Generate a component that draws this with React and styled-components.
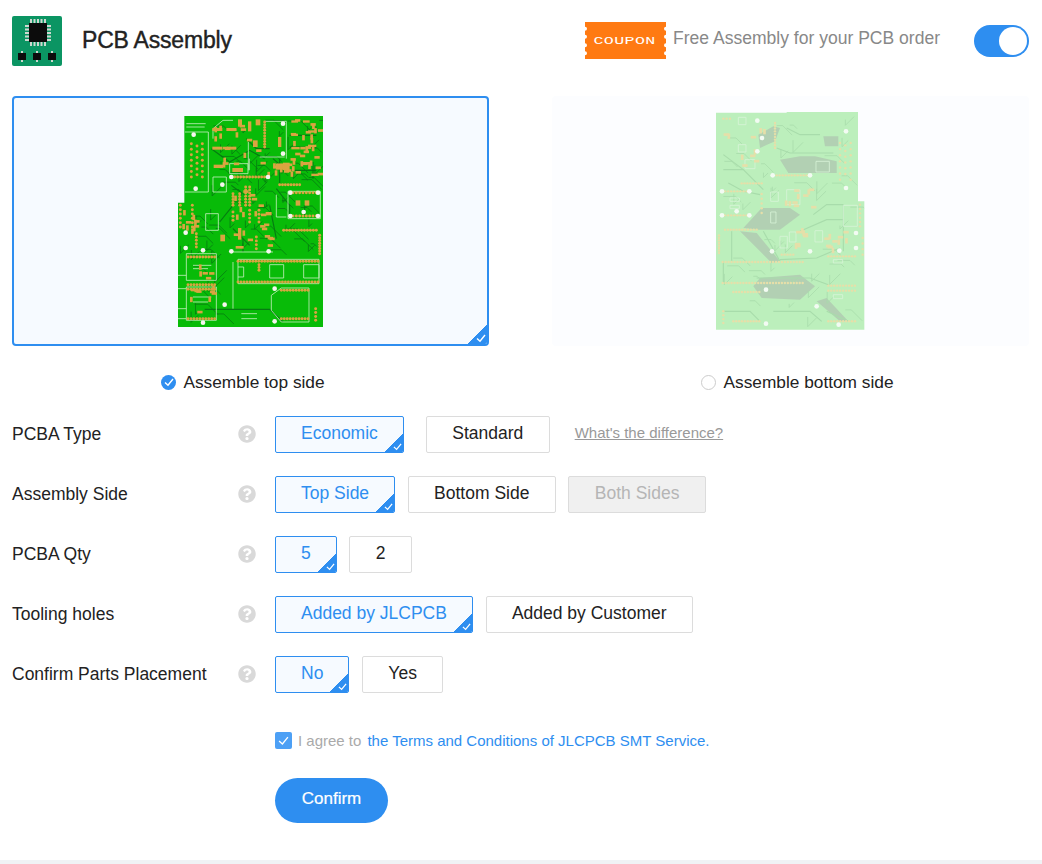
import React from 'react'
import styled, { createGlobalStyle } from 'styled-components'
import { FaQuestionCircle } from 'react-icons/fa'

const BLUE = '#2e8ef0'

const GlobalStyle = createGlobalStyle`
    html, body {
        margin: 0;
        padding: 0;
        background: #fff;
        font-family: "Liberation Sans", Arial, sans-serif;
        color: #222;
    }
`

// small seeded random so the board drawing stays the same on every load
const makeRandom = (seed) => () => {
    seed = (seed * 16807) % 2147483647
    return seed / 2147483647
}

const lineOf = (x1, y1, x2, y2, n) =>
    Array.from({ length: n }, (_, i) => [
        x1 + ((x2 - x1) * i) / Math.max(n - 1, 1),
        y1 + ((y2 - y1) * i) / Math.max(n - 1, 1),
    ])

const scatter = (rand, x, y, w, h, n) =>
    Array.from({ length: n }, () => [x + rand() * w, y + rand() * h, rand() > 0.5])

const randomTraces = (rand, x, y, w, h, n) =>
    Array.from({ length: n }, () => {
        const sx = x + rand() * w
        const sy = y + rand() * h
        const a = 10 + rand() * 30
        const b = 8 + rand() * 25
        return rand() > 0.5
            ? `M${sx} ${sy} h${a} l${b} ${b}`
            : `M${sx} ${sy} v${a} l${b} ${-b}`
    })

// all the numbers below are in 3x zoom units, the svg viewBox takes care of it
const TOP_HOLES = [[72, 88], [78, 250], [185, 215], [295, 215], [340, 55], [340, 145], [362, 262], [445, 262], [362, 332], [445, 332], [48, 382], [48, 428], [100, 435], [185, 438], [297, 438], [315, 550], [165, 598], [100, 652], [315, 648], [158, 238], [402, 320]]
const TOP_ROWS = [
    [205, 468, 445, 468, 28], [205, 530, 445, 530, 28], [335, 555, 415, 555, 10], [335, 640, 415, 640, 10],
    [55, 455, 135, 455, 10], [55, 538, 135, 538, 10], [55, 552, 135, 552, 10], [55, 640, 135, 640, 10],
    [342, 375, 440, 375, 12], [195, 215, 285, 215, 11], [285, 50, 285, 125, 10], [330, 238, 390, 238, 8],
    [370, 262, 440, 262, 8], [370, 332, 440, 332, 8], [450, 390, 450, 445, 8], [65, 115, 65, 215, 7],
    [82, 122, 82, 208, 6], [98, 115, 98, 215, 7], [228, 245, 228, 300, 7], [240, 245, 240, 300, 7],
    [190, 265, 190, 300, 5], [210, 265, 210, 300, 5], [32, 300, 32, 365, 6], [68, 300, 68, 365, 6],
    [80, 385, 80, 425, 5], [438, 610, 438, 645, 4], [190, 320, 190, 345, 3], [240, 315, 240, 350, 4],
    [268, 315, 268, 350, 4], [260, 395, 260, 430, 4], [268, 478, 268, 495, 3],
]
const TOP_TRACES = [
    'M125 130 L180 170 L240 135 L285 160', 'M185 240 L215 262 L205 300', 'M320 250 L360 300 L360 340',
    'M105 612 L300 612 L340 650', 'M310 160 L350 195 L440 195', 'M360 90 L440 90', 'M360 125 L440 125',
    'M230 100 L260 130 L300 130', 'M190 370 L240 420', 'M220 400 L220 440', 'M330 160 L330 240',
    'M300 300 L320 400', 'M150 350 L190 300', 'M430 170 L430 220', 'M405 300 L405 330',
]
const TOP_OUTLINES = [
    'M46 80 H116 V260 H46', 'M130 70 L160 45 H190 M130 100 V70', 'M50 445 H140 V525 H50 Z', 'M50 545 H140 V645 H50 Z',
    'M205 462 H448 V535 H205 Z', 'M305 570 L335 548 H418 V650 H335 L305 615 Z', 'M355 258 H452 V340 H355 Z',
    'M185 440 H310', 'M108 325 H146 V375 H108 Z', 'M300 478 H342 V518 H300 Z', 'M402 478 H448 V518 H402 Z',
    'M285 48 H350 M350 48 V160 M270 155 H345', 'M130 215 H170 V260 H130 Z', 'M320 268 V335 H350',
    'M25 640 H50 M25 610 H50 M25 510 H50 M25 550 H50', 'M180 175 H235 V205 H180 Z',
    'M50 55 H108 M50 65 H105', 'M215 625 H262 M215 640 H262', 'M70 480 H125 M70 490 H115 M70 575 H125 M70 590 H115',
    'M205 485 H222 V515 H205', 'M190 470 V610', 'M236 110 V195', 'M239 160 V195',
]
const TOP_BIG_PADS = [
    [128, 68, 30, 9], [170, 68, 30, 9], [128, 124, 30, 9], [170, 124, 30, 9], [205, 42, 12, 22], [235, 48, 10, 30],
    [258, 42, 14, 18], [250, 105, 14, 20], [325, 95, 10, 30], [318, 175, 22, 18], [340, 172, 20, 22], [188, 188, 32, 12],
    [132, 178, 28, 10], [152, 388, 14, 20], [205, 368, 10, 35], [198, 422, 24, 8], [288, 320, 18, 10],
    [365, 45, 20, 7], [400, 45, 20, 7], [365, 85, 20, 7], [415, 75, 25, 7], [365, 125, 25, 7], [415, 118, 25, 7],
    [395, 170, 28, 7], [425, 205, 22, 7], [378, 285, 14, 16], [405, 285, 14, 16],
]

const BOTTOM_HOLES = [[438, 80], [438, 250], [172, 48], [172, 140], [218, 212], [330, 212], [66, 260], [148, 260], [66, 332], [148, 332], [110, 320], [468, 385], [468, 430], [418, 438], [216, 440], [330, 440], [198, 555], [350, 605], [198, 657], [416, 660], [186, 100]]
const BOTTOM_ROWS = [
    [68, 472, 308, 472, 28], [68, 535, 308, 535, 28], [100, 562, 178, 562, 10], [100, 650, 178, 650, 10],
    [75, 375, 170, 375, 12], [230, 212, 320, 212, 11], [225, 55, 225, 130, 10], [125, 236, 185, 236, 8],
    [75, 260, 140, 260, 8], [75, 332, 140, 332, 8], [57, 392, 57, 445, 8], [420, 115, 420, 225, 7],
    [436, 122, 436, 208, 6], [452, 115, 452, 225, 7], [385, 543, 465, 543, 10], [385, 558, 465, 558, 10],
    [385, 650, 465, 650, 10], [385, 455, 465, 455, 10], [185, 268, 185, 325, 5], [245, 450, 280, 450, 5],
    [70, 620, 70, 655, 4], [480, 300, 480, 365, 6], [488, 400, 488, 450, 4], [70, 42, 90, 42, 3],
]
const BOTTOM_TRACES = [
    'M70 195 L130 195 L190 255', 'M70 620 L150 620 L180 650', 'M385 540 L330 520 L170 520', 'M95 380 V470',
    'M70 470 V535', 'M340 330 L380 300 H430', 'M300 380 L380 345 H430', 'M240 465 L350 460 L420 430',
    'M190 380 L240 470', 'M230 130 L270 145 H400', 'M85 235 L130 260 L180 270', 'M220 620 H330 L365 650',
    'M380 620 L445 650', 'M70 150 L130 195', 'M260 70 L300 90 H360', 'M430 300 V440',
]
const BOTTOM_FILLS = [
    'M130 370 L185 310 L270 310 L300 330 L240 375 L175 375 Z', 'M240 165 L300 155 H345 L410 170 V205 H300 L265 205 Z',
    'M175 90 L220 65 L240 70 L225 110 L180 130 Z', 'M180 520 L300 510 L345 545 L300 585 L185 580 L160 545 Z',
    'M120 380 L170 385 L240 470 L215 475 Z', 'M370 95 H415 V125 H375 Z', 'M350 590 L380 580 L445 650 L420 650 Z',
]
const BOTTOM_OUTLINES = [
    'M115 38 H138 V60 H115 Z', 'M115 120 H138 V142 H115 Z', 'M135 165 H165 V192 H135 Z', 'M348 170 H388 V202 H348 Z',
    'M212 322 H228 V355 H212 Z', 'M345 378 H368 V412 H345 Z', 'M268 382 H288 V412 H268 Z', 'M240 395 H262 V430 H240 Z',
    'M430 302 H472 V365 H430 Z', 'M90 280 H118 V290 H90 Z', 'M90 302 H118 V312 H90 Z', 'M400 570 H428 V582 H400 Z',
    'M400 465 H428 V475 H400 Z', 'M212 262 H235 V290 H212 Z', 'M260 255 H300 V300 H260 Z',
]

const Board = ({ points, bg, viewBox, clipId, holes, rows, traces, outlines, fills, bigPads = [], colors, seed, clusters, noise, padSize }) => {
    const rand = makeRandom(seed)
    const smd = clusters.flatMap(([x, y, w, h, n]) => scatter(rand, x, y, w, h, n))
    const extra = noise.flatMap(([x, y, w, h, n]) => randomTraces(rand, x, y, w, h, n))
    const [, , vw, vh] = viewBox.split(' ')
    return (
        <BoardSvg viewBox={viewBox} width={vw / 3} height={vh / 3}>
            <clipPath id={clipId}><polygon points={points} /></clipPath>
            <polygon points={points} fill={bg} />
            <g clipPath={`url(#${clipId})`}>
                {fills.map((d, i) => <path key={i} d={d} fill={colors.fill} />)}
                {extra.map((d, i) => <path key={i} d={d} fill="none" stroke={colors.trace} strokeWidth="2.4" />)}
                {traces.map((d, i) => <path key={i} d={d} fill="none" stroke={colors.trace} strokeWidth="3.4" />)}
                {outlines.map((d, i) => <path key={i} d={d} fill="none" stroke={colors.outline} strokeWidth="2.4" />)}
                {smd.map(([x, y, tall], i) => (
                    <rect key={i} x={x} y={y} width={tall ? 8 : 16} height={tall ? 16 : 8} fill={colors.pad} />
                ))}
                {bigPads.map(([x, y, w, h], i) => <rect key={i} x={x} y={y} width={w} height={h} fill={colors.pad} />)}
                {rows.flatMap(([x1, y1, x2, y2, n], r) => lineOf(x1, y1, x2, y2, n).map(([x, y], i) => (
                    <circle key={`${r}-${i}`} cx={x} cy={y} r={padSize} fill={colors.pad} />
                )))}
                {holes.map(([x, y], i) => <circle key={i} cx={x} cy={y} r="7" fill={colors.hole} />)}
            </g>
        </BoardSvg>
    )
}

const CHIP_COLS = [18, 21.5, 25, 28.5, 32]
const CHIP_ROWS = [9, 12.5, 16, 19.5, 23]

const ChipLogo = () => (
    <svg width="50" height="50" viewBox="0 0 50 50">
        <rect width="50" height="50" rx="2" fill="#0b9563" />
        {CHIP_COLS.map((p) => (
            <React.Fragment key={p}>
                <rect x={p} y="3" width="2" height="4" fill="#cfd8d0" />
                <rect x={p} y="26" width="2" height="4" fill="#cfd8d0" />
            </React.Fragment>
        ))}
        {CHIP_ROWS.map((p) => (
            <React.Fragment key={p}>
                <rect x="13" y={p} width="4" height="2" fill="#cfd8d0" />
                <rect x="35" y={p} width="4" height="2" fill="#cfd8d0" />
            </React.Fragment>
        ))}
        <rect x="17" y="7" width="18" height="19" fill="#0c0c0c" />
        {[6, 21, 36].map((x) => (
            <React.Fragment key={x}>
                <rect x={x + 3} y="35" width="2" height="11" fill="#cfd8d0" />
                <rect x={x} y="37" width="8" height="7" fill="#0c0c0c" />
            </React.Fragment>
        ))}
    </svg>
)

const NOTCHES = [6.7, 14.7, 23.3, 31.3]

const ticketPath = () => {
    // ticket edge: little half rounds bitten out on both sides
    let d = 'M0 0H81'
    NOTCHES.forEach((y) => { d += `V${y - 2}A2 2 0 0 0 81 ${y + 2}` })
    d += 'V37H0'
    ;[...NOTCHES].reverse().forEach((y) => { d += `V${y + 2}A2 2 0 0 0 0 ${y - 2}` })
    return d + 'Z'
}

const CouponBadge = () => (
    <svg width="81" height="37" viewBox="0 0 81 37">
        <path d={ticketPath()} fill="#ff7a12" />
        <text transform="translate(8.5 22.2) scale(1.45 1)" fill="#fff" fontFamily="Liberation Mono, monospace" fontSize="11.5" letterSpacing=".25">COUPON</text>
    </svg>
)

const CheckMark = ({ size = 9, color = '#fff', width = 1.4 }) => (
    <svg width={size} height={size} viewBox="0 0 10 10">
        <path d="M1 5.4 L4 8.2 L9 2" fill="none" stroke={color} strokeWidth={width} />
    </svg>
)

const Corner = ({ big }) => (
    <CornerWrap $big={big}>
        <CheckMark size={big ? 10 : 9} />
    </CornerWrap>
)

const Option = ({ active, disabled, children }) => (
    <OptionBtn $active={active} $disabled={disabled}>
        {children}
        {active && <Corner />}
    </OptionBtn>
)

const FORM_ROWS = [
    { label: 'PCBA Type', options: [['Economic', true], ['Standard']], wide: true, link: "What's the difference?" },
    { label: 'Assembly Side', options: [['Top Side', true], ['Bottom Side'], ['Both Sides', false, true]] },
    { label: 'PCBA Qty', options: [['5', true], ['2']] },
    { label: 'Tooling holes', options: [['Added by JLCPCB', true], ['Added by Customer']] },
    { label: 'Confirm Parts Placement', options: [['No', true], ['Yes']] },
]

const App = () => {
    return (
        <Page>
            <GlobalStyle />
            <Header>
                <Brand>
                    <ChipLogo />
                    <Title>PCB Assembly</Title>
                </Brand>
                <Promo>
                    <CouponBadge />
                    <PromoText>Free Assembly for your PCB order</PromoText>
                    <Toggle><Knob /></Toggle>
                </Promo>
            </Header>

            <Cards>
                <CardCol>
                    <Card $active>
                        <Board
                            viewBox="25 32 437 633"
                            clipId="top-board"
                            points="44,32 462,32 462,665 25,665 25,292 44,292"
                            bg="#08bb08"
                            holes={TOP_HOLES}
                            rows={TOP_ROWS}
                            traces={TOP_TRACES}
                            outlines={TOP_OUTLINES}
                            bigPads={TOP_BIG_PADS}
                            fills={[]}
                            seed={4211}
                            padSize={4.4}
                            colors={{ trace: '#067a12', outline: '#c9efc2', pad: '#d9a441', hole: '#f6f6f0', fill: '#067a12' }}
                            clusters={[[360, 40, 85, 175, 30], [125, 45, 150, 135, 18], [190, 240, 110, 180, 20], [60, 465, 70, 160, 14], [290, 170, 90, 30, 10], [30, 300, 50, 70, 10]]}
                            noise={[[120, 40, 330, 200, 42], [180, 240, 260, 200, 30], [30, 300, 120, 140, 12], [60, 460, 80, 180, 10]]}
                        />
                        <Corner big />
                    </Card>
                    <RadioLine $offset={-7.5}>
                        <RadioOn><CheckMark size={10} /></RadioOn>
                        Assemble top side
                    </RadioLine>
                </CardCol>
                <CardCol>
                    <Card>
                        <Board
                            viewBox="48 22 445 653"
                            clipId="bottom-board"
                            points="48,24 260,24 260,22 474,22 474,290 493,290 493,675 48,675"
                            bg="#bcefbc"
                            holes={BOTTOM_HOLES}
                            rows={BOTTOM_ROWS}
                            traces={BOTTOM_TRACES}
                            outlines={BOTTOM_OUTLINES}
                            fills={BOTTOM_FILLS}
                            seed={907}
                            padSize={3.6}
                            colors={{ trace: '#a8dcab', outline: '#d8f4d8', pad: '#e6dfa9', hole: '#f3fbf3', fill: '#b2d0b3' }}
                            clusters={[[70, 40, 120, 150, 10], [250, 250, 90, 60, 10], [350, 370, 90, 60, 10], [240, 370, 90, 60, 8]]}
                            noise={[[70, 40, 380, 260, 22], [70, 300, 400, 340, 24]]}
                        />
                    </Card>
                    <RadioLine $offset={7}>
                        <RadioOff />
                        Assemble bottom side
                    </RadioLine>
                </CardCol>
            </Cards>

            <Form>
                {FORM_ROWS.map((row) => (
                    <Row key={row.label}>
                        <Label>{row.label}</Label>
                        <HelpIcon><FaQuestionCircle size={18} /></HelpIcon>
                        <Options $wide={row.wide}>
                            {row.options.map(([text, active, disabled]) => (
                                <Option key={text} active={active} disabled={disabled}>{text}</Option>
                            ))}
                            {row.link && <DiffLink>{row.link}</DiffLink>}
                        </Options>
                    </Row>
                ))}
            </Form>

            <Agree>
                <CheckBox><CheckMark size={11} width={1.2} /></CheckBox>
                <AgreeText>I agree to</AgreeText>
                <TermsLink>the Terms and Conditions of JLCPCB SMT Service.</TermsLink>
            </Agree>
            <ConfirmBtn>Confirm</ConfirmBtn>
            <FooterBand />
        </Page>
    )
}

const Page = styled.div`
    width: 1042px;
    height: 864px;
    position: relative;
    overflow: hidden;
    background: #fff;
`

const Header = styled.div`
    height: 96px;
    padding: 0 13px 0 12px;
    box-sizing: border-box;
    display: flex;
    justify-content: space-between;
    align-items: flex-start;
`

const Brand = styled.div`
    display: flex;
    align-items: center;
    gap: 20px;
    margin-top: 16px;
    height: 50px;
`

const Title = styled.h1`
    margin: 0;
    font-size: 23px;
    font-weight: 400;
    color: #222;
    -webkit-text-stroke: 0.4px #222;
    letter-spacing: -0.2px;
    position: relative;
    top: -1px;
`

const Promo = styled.div`
    display: flex;
    align-items: center;
    margin-top: 22px;
    height: 37px;
`

const PromoText = styled.span`
    font-size: 17.55px;
    color: #888;
    margin-left: 7px;
    position: relative;
    top: -2px;
`

const Toggle = styled.div`
    width: 55px;
    height: 32px;
    box-sizing: border-box;
    border-radius: 16px;
    background: ${BLUE};
    margin-left: 34px;
    padding: 2px;
    display: flex;
    justify-content: flex-end;
`

const Knob = styled.div`
    width: 28px;
    height: 28px;
    border-radius: 50%;
    background: #fff;
`

const Cards = styled.div`
    display: flex;
    padding: 0 0 0 12px;
    gap: 63px;
`

const CardCol = styled.div`
    width: 477px;
    flex: none;
    display: flex;
    flex-direction: column;
`

const Card = styled.div`
    height: 250px;
    box-sizing: border-box;
    position: relative;
    border-radius: 4px;
    border: 2px solid ${(p) => (p.$active ? BLUE : 'transparent')};
    background: ${(p) => (p.$active ? '#f6faff' : '#fcfdff')};
    display: flex;
    align-items: center;
    justify-content: center;
    overflow: hidden;
`

const BoardSvg = styled.svg`
    display: block;
    flex: none;
`

const CornerWrap = styled.span`
    position: absolute;
    right: 0;
    bottom: 0;
    width: ${(p) => (p.$big ? '20px' : '19px')};
    height: ${(p) => (p.$big ? '19px' : '18px')};
    background: linear-gradient(135deg, transparent 50%, ${BLUE} 50%);
    display: flex;
    align-items: flex-end;
    justify-content: flex-end;
    padding: 0 1px 1px 0;
    box-sizing: border-box;
`

const RadioLine = styled.div`
    display: flex;
    align-items: center;
    justify-content: center;
    gap: 7px;
    height: 70px;
    padding-top: 2px;
    box-sizing: border-box;
    font-size: 17.3px;
    color: #222;
    position: relative;
    left: ${(p) => p.$offset}px;
`

const RadioOn = styled.span`
    width: 15px;
    height: 15px;
    border-radius: 50%;
    background: ${BLUE};
    display: flex;
    align-items: center;
    justify-content: center;
`

const RadioOff = styled.span`
    width: 13px;
    height: 13px;
    border: 1px solid #ccc;
    border-radius: 50%;
    background: #fff;
`

const Form = styled.div`
    padding-left: 12px;
    display: flex;
    flex-direction: column;
    gap: 23px;
`

const Row = styled.div`
    display: flex;
    align-items: center;
    height: 37px;
`

const Label = styled.div`
    width: 226px;
    font-size: 17.5px;
    color: #222;
    white-space: nowrap;
`

const HelpIcon = styled.span`
    width: 37px;
    display: flex;
    color: #d9d9d9;
    position: relative;
    top: -1px;
`

const Options = styled.div`
    display: flex;
    align-items: center;
    gap: ${(p) => (p.$wide ? '22px' : '12.6px')};
`

const OptionBtn = styled.div`
    position: relative;
    height: 37px;
    box-sizing: border-box;
    padding: 0 ${(p) => (p.$active ? '25px' : '25.4px')} 2px;
    display: flex;
    align-items: center;
    justify-content: center;
    font-size: 17.5px;
    white-space: nowrap;
    border-radius: 2px;
    border: 1px solid ${(p) => (p.$active ? BLUE : '#dcdcdc')};
    background: ${(p) => (p.$active ? '#f6faff' : p.$disabled ? '#f0f0f0' : '#fff')};
    color: ${(p) => (p.$active ? BLUE : p.$disabled ? '#b5b5b5' : '#222')};
    overflow: hidden;
`

const DiffLink = styled.a`
    font-size: 15px;
    color: #999;
    text-decoration: underline;
    margin-left: 3px;
    position: relative;
    top: -2px;
`

const Agree = styled.div`
    display: flex;
    align-items: center;
    margin: 39px 0 0 275px;
    height: 17px;
    font-size: 15px;
`

const CheckBox = styled.span`
    width: 17px;
    height: 17px;
    background: #4da0f5;
    border-radius: 2px;
    display: flex;
    align-items: center;
    justify-content: center;
`

const AgreeText = styled.span`
    color: #aaa;
    margin-left: 6px;
`

const TermsLink = styled.a`
    color: ${BLUE};
    margin-left: 6px;
`

const ConfirmBtn = styled.button`
    display: block;
    margin: 29px 0 0 275px;
    width: 113px;
    height: 45px;
    border: 0;
    border-radius: 23px;
    background: ${BLUE};
    color: #fff;
    font-family: inherit;
    font-size: 17px;
    -webkit-text-stroke: 0.2px #fff;
    padding: 0 0 4px;
`

const FooterBand = styled.div`
    position: absolute;
    left: 0;
    right: 0;
    bottom: 0;
    height: 4px;
    background: #f0f2f5;
`

export default App
